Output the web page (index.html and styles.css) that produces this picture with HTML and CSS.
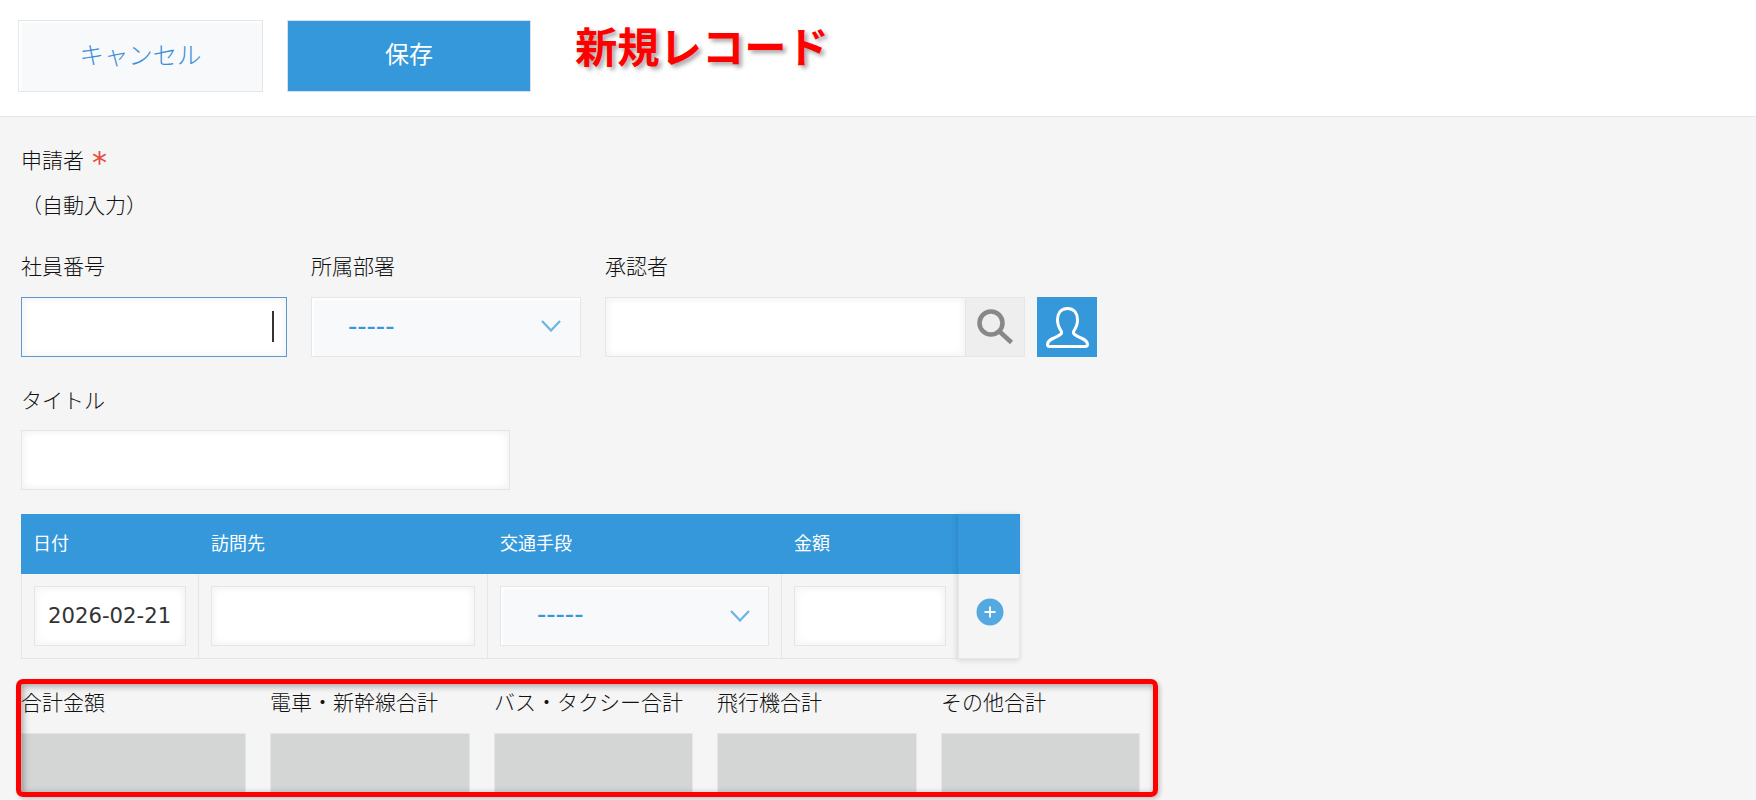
FILE: index.html
```html
<!DOCTYPE html>
<html lang="ja">
<head>
<meta charset="utf-8">
<title>新規レコード</title>
<link rel="stylesheet" href="styles.css">
</head>
<body>
<header class="toolbar">
  <button class="btn btn-cancel">キャンセル</button>
  <button class="btn btn-save">保存</button>
  <h1 class="heading">新規レコード</h1>
</header>
<main class="form">
  <section class="applicant">
    <div class="label">申請者<span class="required">*</span></div>
    <div class="auto">（自動入力）</div>
  </section>
  <section class="row row-basic">
    <div class="field field-number"><div class="label">社員番号</div><div class="input focused"><span class="caret"></span></div></div>
    <div class="field field-dept"><div class="label">所属部署</div>
      <div class="select"><span class="dashes">-----</span><svg class="chevron" viewBox="0 0 20 12"><path d="M1 1 10 10.500 19 1"/></svg></div></div>
    <div class="field field-approver"><div class="label">承認者</div>
      <div class="picker">
        <div class="input"></div>
        <div class="search"><svg viewBox="0 0 60 60"><circle cx="26" cy="26" r="11.500"/><path d="M34.500 34.500 46.500 45.500"/></svg></div>
        <div class="user"><svg viewBox="0 0 60 60"><path d="M30.500 11.500C23.500 11.500 20.500 17 20.500 23C20.500 28 22 31 24.500 34.500C25.500 37.500 21 39 17 41C12 43 10.500 45 10.500 47.500Q10.500 49.500 13 49.500H48Q50.500 49.500 50.500 47.500C50.500 45 49 43 44 41C40 39 35.500 37.500 36.500 34.500C39 31 40.500 28 40.500 23C40.500 17 37.500 11.500 30.500 11.500Z"/></svg></div>
      </div></div>
  </section>
  <section class="field field-title"><div class="label">タイトル</div><div class="input"></div></section>
  <section class="table">
    <div class="th">日付</div><div class="th">訪問先</div><div class="th">交通手段</div><div class="th">金額</div><div class="th"></div>
    <div class="td"><div class="input date">2026-02-21</div></div>
    <div class="td"><div class="input"></div></div>
    <div class="td"><div class="select"><span class="dashes">-----</span><svg class="chevron" viewBox="0 0 20 12"><path d="M1 1 10 10.500 19 1"/></svg></div></div>
    <div class="td"><div class="input"></div></div>
    <div class="td td-action"><svg class="add" viewBox="0 0 28 28"><circle cx="14" cy="14" r="13.500"/><path d="M8.500 14h11M14 8.500v11"/></svg></div>
    <div class="sticky-shade"></div>
  </section>
  <section class="totals">
    <div><div class="label">合計金額</div><div class="total"></div></div>
    <div><div class="label">電車・新幹線合計</div><div class="total"></div></div>
    <div><div class="label">バス・タクシー合計</div><div class="total"></div></div>
    <div><div class="label">飛行機合計</div><div class="total"></div></div>
    <div><div class="label">その他合計</div><div class="total"></div></div>
    <div class="highlight"></div>
  </section>
</main>
</body>
</html>
```
FILE: styles.css
```css
* { box-sizing: border-box; }
body {
  margin: 0;
  height: 800px;
  overflow: hidden;
  background: #f5f5f5;
  color: #111;
  font-family: "Noto Sans CJK JP", sans-serif;
  font-weight: 300;
}
svg { display: block; fill: none; }
.toolbar {
  display: flex;
  height: 117px;
  padding: 20px 18px;
  background: #fff;
  border-bottom: 1px solid #e3e7e8;
}
.btn {
  height: 72px;
  padding: 0 0 6px;
  border: 1px solid #e3e7e8;
  font: inherit;
  font-size: 24.400px;
}
.btn-cancel {
  width: 245px;
  background: #f7f9fa;
  color: #3a8edb;
  box-shadow: inset 2px 2px 2px #fff;
}
.btn-save {
  width: 244px;
  margin-left: 24px;
  padding-bottom: 7px;
  background: #3498db;
  border-color: #d5e3ef;
  color: #fff;
  font-size: 24px;
  font-weight: 400;
}
.heading {
  margin: -4px 0 0 44px;
  color: #f00;
  font-size: 42.300px;
  font-weight: 700;
  line-height: 58px;
  text-shadow: 3px 3px 4px rgba(0, 0, 0, .35);
}
.form { padding: 25px 21px 0; }
.label { height: 40px; font-size: 21px; line-height: 34px; white-space: nowrap; }
.required { margin-left: 8px; color: #e74c3c; font-family: "DejaVu Sans", sans-serif; font-size: 30px; font-weight: 400; line-height: 20px; vertical-align: -5px; }
.auto { height: 40px; font-size: 21px; line-height: 44px; }
.applicant { height: 107px; }
.row { display: flex; gap: 24px; height: 134px; }
.row .label { height: 48px; line-height: 32px; }
.field-title .label { height: 47px; line-height: 33px; }
.input, .select {
  height: 60px;
  background: #fff;
  border: 1px solid #e3e7e8;
  box-shadow: inset 0 0 6px 2px #f2f3f3;
}
.field-number { width: 266px; }
.field-dept { width: 270px; }
.focused {
  display: flex;
  align-items: center;
  justify-content: flex-end;
  padding-right: 12px;
  border-color: #5e97d1;
}
.caret { width: 2px; height: 31px; margin-bottom: 2px; background: #333; }
.select {
  display: flex;
  align-items: center;
  justify-content: space-between;
  padding: 0 19px 0 36px;
  background: #f7f9fa;
  box-shadow: inset 2px 2px 2px #fff;
}
.dashes { color: #3498db; font-size: 26px; font-weight: 500; line-height: 50px; padding-bottom: 7px; }
.chevron { width: 20px; height: 12px; margin-bottom: 2px; stroke: #6db3e4; stroke-width: 2.200; }
.picker { display: flex; }
.picker .input { width: 360px; border-right: 0; }
.search { width: 60px; height: 60px; background: #eee; border: 1px solid #e3e7e8; }
.search svg { width: 60px; height: 60px; margin: -1px; stroke: #888; stroke-width: 4.500; }
.user { width: 60px; height: 60px; margin-left: 12px; background: #3498db; }
.user svg { stroke: #fff; stroke-width: 3; }
.field-title { width: 489px; height: 131px; }
.table {
  position: relative;
  display: grid;
  grid-template-columns: 177px 289px 294px 177px 62px;
  grid-template-rows: 60px 85px;
  width: 999px;
}
.th { padding-left: 13px; background: #3498db; color: #fff; font-size: 18px; font-weight: 400; line-height: 57px; }
.th:first-child { padding-left: 12px; }
.td { padding: 12px 12px 0 12px; border: solid #e3e7e8; border-width: 0 0 1px 1px; }
.td-action { padding: 24px 0 0 17px; border-right: 1px solid #e3e7e8; }
.td .select { padding-right: 18px; }
.td .chevron { margin-bottom: 0; }
.td .dashes { padding-bottom: 8px; }
.date { padding-left: 13px; color: #333; font-family: "DejaVu Sans", sans-serif; font-size: 21.200px; font-weight: 400; line-height: 58px; }
.add { width: 28px; height: 28px; }
.add circle { fill: #55a9e1; }
.add path { stroke: #fff; stroke-width: 1.800; }
.sticky-shade {
  position: absolute;
  top: 0;
  right: 0;
  width: 62px;
  height: 145px;
  box-shadow: -1px 1px 6px rgba(0, 0, 0, .14);
}
.totals {
  position: relative;
  display: grid;
  grid-template-columns: 225px 200px 199px 200px 199px;
  column-gap: 24px;
  padding-top: 26px;
}
.totals .label { height: 48px; line-height: 33px; }
.total { height: 60px; background: #d4d6d5; border: 1px solid #e3e7e8; }
.highlight {
  position: absolute;
  top: 20px;
  left: -5px;
  width: 1142px;
  height: 118px;
  border: 5px solid #f00;
  border-radius: 7px;
  box-shadow: 2px 2px 4px rgba(0, 0, 0, .2), inset 2px 2px 7px rgba(0, 0, 0, .35);
}
```
